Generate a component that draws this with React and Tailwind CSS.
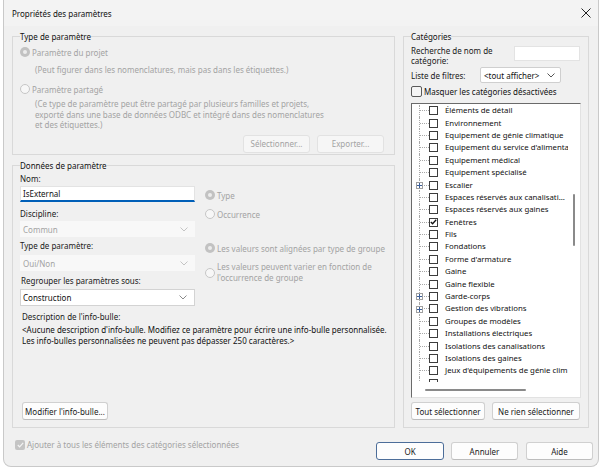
import React from 'react';

const categories = [
  { label: 'Éléments de détail' },
  { label: 'Environnement' },
  { label: 'Equipement de génie climatique' },
  { label: "Equipement du service d'alimenta" },
  { label: 'Equipement médical' },
  { label: 'Equipement spécialisé' },
  { label: 'Escalier', plus: true },
  { label: 'Espaces réservés aux canalisati...' },
  { label: 'Espaces réservés aux gaines' },
  { label: 'Fenêtres', checked: true },
  { label: 'Fils' },
  { label: 'Fondations' },
  { label: "Forme d'armature" },
  { label: 'Gaine' },
  { label: 'Gaine flexible' },
  { label: 'Garde-corps', plus: true },
  { label: 'Gestion des vibrations', plus: true },
  { label: 'Groupes de modèles' },
  { label: 'Installations électriques' },
  { label: 'Isolations des canalisations' },
  { label: 'Isolations des gaines' },
  { label: "Jeux d'équipements de génie clim" },
  { label: '' },
];

function Chevron({ color = '#8a8a8a' }) {
  return (
    <svg width="8" height="5" viewBox="0 0 8 5" className="shrink-0">
      <path d="M0.5 0.5 L4 4 L7.5 0.5" fill="none" stroke={color} strokeWidth="1" />
    </svg>
  );
}

function Radio({ checked }) {
  if (checked) {
    return (
      <span className="flex h-[10px] w-[10px] shrink-0 items-center justify-center rounded-full bg-[#c2c2c2]">
        <span className="h-[4px] w-[4px] rounded-full bg-[#ececec]" />
      </span>
    );
  }
  return <span className="h-[10px] w-[10px] shrink-0 rounded-full border border-[#c6c6c6] bg-[#f7f7f7]" />;
}

function Button({ children, disabled, primary, className = '' }) {
  let look = 'border-[#d0d0d0] border-b-[#bdbdbd] bg-[#fdfdfd] text-[#1a1a1a]';
  if (disabled) look = 'border-[#e2e2e2] bg-[#f6f6f6] text-[#a3a3a3]';
  if (primary) look = 'border-[#4c6d99] bg-[#fdfdfd] text-[#1a1a1a]';
  return (
    <div className={`flex h-[18px] shrink-0 items-center justify-center whitespace-nowrap rounded-[3px] border ${look} ${className}`}>
      {children}
    </div>
  );
}

function DisabledSelect({ value }) {
  return (
    <div className="flex h-[16px] w-[175px] items-center justify-between bg-[#f8f8f8] pl-[3px] pr-[7px] text-[#a3a3a3]">
      <span>{value}</span>
      <Chevron color="#c4c4c4" />
    </div>
  );
}

function TreeRow({ item }) {
  return (
    <div className="relative flex h-[12.4px] shrink-0 items-center whitespace-nowrap">
      <span className="w-[7px] shrink-0" />
      <span className="flex h-full w-[10px] shrink-0 items-center border-l border-dotted border-[#a8a8a8]">
        <span className="w-full border-t border-dotted border-[#a8a8a8]" />
      </span>
      {item.plus && (
        <span className="absolute left-[4px] top-[3px] flex h-[7px] w-[7px] items-center justify-center border border-[#a0a0a0] bg-white">
          <svg width="5" height="5" viewBox="0 0 5 5">
            <path d="M0 2.5 H5 M2.5 0 V5" stroke="#3b5f9a" strokeWidth="1" />
          </svg>
        </span>
      )}
      <span className="flex h-[9px] w-[9px] shrink-0 items-center justify-center border border-[#3c3c3c] bg-white">
        {item.checked && (
          <svg width="7" height="6" viewBox="0 0 7 6">
            <path d="M0.8 3 L2.6 4.8 L6.2 0.8" fill="none" stroke="#111" strokeWidth="1.3" />
          </svg>
        )}
      </span>
      {item.label && <span className="ml-[7px] text-[7.8px] text-[#111]">{item.label}</span>}
    </div>
  );
}

export default function App() {
  return (
    <div className="h-[471px] w-[599px] overflow-hidden whitespace-nowrap bg-white font-['Segoe_UI','Noto_Sans',sans-serif] text-[8px] leading-[11px] text-[#1a1a1a]">
      <div className="ml-[3px] flex h-[467px] w-[596px] flex-col rounded-b-[8px] border border-t-0 border-[#c9c9c9] bg-[#f0f0f0]">
        {/* title bar */}
        <div className="flex h-[26px] shrink-0 items-center justify-between bg-[#f3f3f3] pl-[8px] pr-[7px]">
          <span className="text-[#111]">Propriétés des paramètres</span>
          <svg width="10" height="10" viewBox="0 0 10 10">
            <path d="M0.5 0.5 L9.5 9.5 M9.5 0.5 L0.5 9.5" stroke="#222" strokeWidth="1" />
          </svg>
        </div>

        <div className="ml-[8px] flex gap-[8px]">
          {/* left column */}
          <div className="flex w-[383px] shrink-0 flex-col">
            <fieldset className="mt-[5px] flex h-[124px] min-w-0 flex-col border border-[#d9d9d9] px-[7px]">
              <legend className="h-[11px] text-[#111]">Type de paramètre</legend>
              <div className="mt-[3px] flex h-[14px] items-center gap-[2px] text-[#a3a3a3]">
                <Radio checked />
                <span>Paramètre du projet</span>
              </div>
              <div className="mt-[5px] pl-[15px] text-[#a3a3a3]">
                (Peut figurer dans les nomenclatures, mais pas dans les étiquettes.)
              </div>
              <div className="mt-[7px] flex h-[14px] items-center gap-[2px] text-[#a3a3a3]">
                <Radio />
                <span>Paramètre partagé</span>
              </div>
              <div className="mt-[3px] pl-[15px] leading-[10.5px] text-[#a3a3a3]">
                (Ce type de paramètre peut être partagé par plusieurs familles et projets,
                <br />
                exporté dans une base de données ODBC et intégré dans des nomenclatures
                <br />
                et des étiquettes.)
              </div>
              <div className="mt-[4px] flex justify-end gap-[7px] pr-[3px]">
                <Button disabled className="w-[67px]">Sélectionner...</Button>
                <Button disabled className="w-[67px]">Exporter...</Button>
              </div>
            </fieldset>

            <fieldset className="mt-[5px] flex h-[268px] min-w-0 flex-col border border-[#d9d9d9] px-[7px]">
              <legend className="h-[11px] text-[#111]">Données de paramètre</legend>
              <div className="flex">
                <div className="flex w-[175px] flex-col">
                  <span className="mt-[2px]">Nom:</span>
                  <div className="mt-[2px] flex h-[16px] items-center border border-[#e3e3e3] border-b-2 border-b-[#005fb8] bg-white pl-[2px] text-[#111]">
                    IsExternal
                  </div>
                  <span className="mt-[6px]">Discipline:</span>
                  <div className="mt-[2px]">
                    <DisabledSelect value="Commun" />
                  </div>
                  <span className="mt-[3px]">Type de paramètre:</span>
                  <div className="mt-[4px]">
                    <DisabledSelect value="Oui/Non" />
                  </div>
                  <span className="mt-[4px] pl-[1px]">Regrouper les paramètres sous:</span>
                  <div className="mt-[3px] flex h-[17px] items-center justify-between border border-[#d3d3d3] bg-white pl-[2px] pr-[7px] text-[#111]">
                    <span>Construction</span>
                    <Chevron />
                  </div>
                </div>
                <div className="ml-[10px] flex flex-col text-[#a3a3a3]">
                  <div className="mt-[18px] flex h-[12px] items-center gap-[2px]">
                    <Radio checked />
                    <span>Type</span>
                  </div>
                  <div className="mt-[7px] flex h-[12px] items-center gap-[2px]">
                    <Radio />
                    <span>Occurrence</span>
                  </div>
                  <div className="mt-[22px] flex h-[12px] items-center gap-[2px]">
                    <Radio checked />
                    <span>Les valeurs sont alignées par type de groupe</span>
                  </div>
                  <div className="mt-[8px] flex items-center gap-[2px] leading-[10.5px]">
                    <Radio />
                    <span>
                      Les valeurs peuvent varier en fonction de
                      <br />
                      l'occurrence de groupe
                    </span>
                  </div>
                </div>
              </div>
              <span className="mt-[5px] pl-[2px]">Description de l'info-bulle:</span>
              <div className="mt-[2px] pl-[2px] leading-[11px] text-[#111]">
                &lt;Aucune description d'info-bulle. Modifiez ce paramètre pour écrire une info-bulle personnalisée.
                <br />
                Les info-bulles personnalisées ne peuvent pas dépasser 250 caractères.&gt;
              </div>
              <div className="mt-[56px] pl-[2px]">
                <Button className="w-[86px]">Modifier l'info-bulle...</Button>
              </div>
            </fieldset>
          </div>

          {/* right column */}
          <fieldset className="mt-[5px] flex h-[397px] w-[186px] min-w-0 shrink-0 flex-col border border-[#d9d9d9] px-[7px]">
            <legend className="h-[11px] text-[#111]">Catégories</legend>
            <div className="mt-[4px] flex items-start justify-between">
              <span className="leading-[9.5px]">
                Recherche de nom de
                <br />
                catégorie:
              </span>
              <div className="mr-[1px] h-[15px] w-[66px] shrink-0 border border-[#e3e3e3] bg-white" />
            </div>
            <div className="mt-[2px] flex items-center">
              <span className="w-[69px] shrink-0">Liste de filtres:</span>
              <div className="flex h-[16px] w-[81px] shrink-0 items-center justify-between rounded-[2px] border border-[#cfcfcf] bg-white pl-[3px] pr-[5px] text-[#111]">
                <span>&lt;tout afficher&gt;</span>
                <Chevron color="#555" />
              </div>
            </div>
            <div className="mt-[3px] flex items-center gap-[2px]">
              <span className="h-[11px] w-[11px] shrink-0 rounded-[2px] border border-[#5a5a5a] bg-[#f5f5f5]" />
              <span className="text-[#111]">Masquer les catégories désactivées</span>
            </div>
            <div className="mt-[6px] flex h-[295px] w-[170px] border border-b-[#e2e2e2] border-l-[#6a6a6a] border-r-[#e2e2e2] border-t-[#6a6a6a] bg-white">
              <div className="flex w-[156px] flex-col">
                <div className="flex h-[278px] w-[156px] flex-col overflow-hidden pt-[0.5px]">
                  {categories.map((c, i) => (
                    <TreeRow key={i} item={c} />
                  ))}
                </div>
                <div className="flex h-[15px] items-center pl-[13px]">
                  <span className="h-[2px] w-[101px] rounded-full bg-[#8a8a8a]" />
                </div>
              </div>
              <div className="flex w-[12px] shrink-0 flex-col items-center">
                <span className="mt-[90px] h-[52px] w-[2px] rounded-full bg-[#8a8a8a]" />
              </div>
            </div>
            <div className="mt-[4px] flex gap-[7px]">
              <Button className="w-[74px]">Tout sélectionner</Button>
              <Button className="w-[88px]">Ne rien sélectionner</Button>
            </div>
          </fieldset>
        </div>

        {/* bottom row */}
        <div className="mt-[11px] flex items-start justify-between pl-[11px] pr-[5px]">
          <div className="flex items-center gap-[2px] text-[#a3a3a3]">
            <span className="flex h-[10px] w-[10px] items-center justify-center rounded-[2px] bg-[#c4c4c4]">
              <svg width="7" height="6" viewBox="0 0 7 6">
                <path d="M0.8 3 L2.6 4.8 L6.2 0.8" fill="none" stroke="#f4f4f4" strokeWidth="1.2" />
              </svg>
            </span>
            <span>Ajouter à tous les éléments des catégories sélectionnées</span>
          </div>
          <div className="mt-[3px] flex gap-[7px]">
            <Button primary className="w-[68px]">OK</Button>
            <Button className="w-[67px]">Annuler</Button>
            <Button className="ml-[1px] w-[67px]">Aide</Button>
          </div>
        </div>
      </div>
    </div>
  );
}
